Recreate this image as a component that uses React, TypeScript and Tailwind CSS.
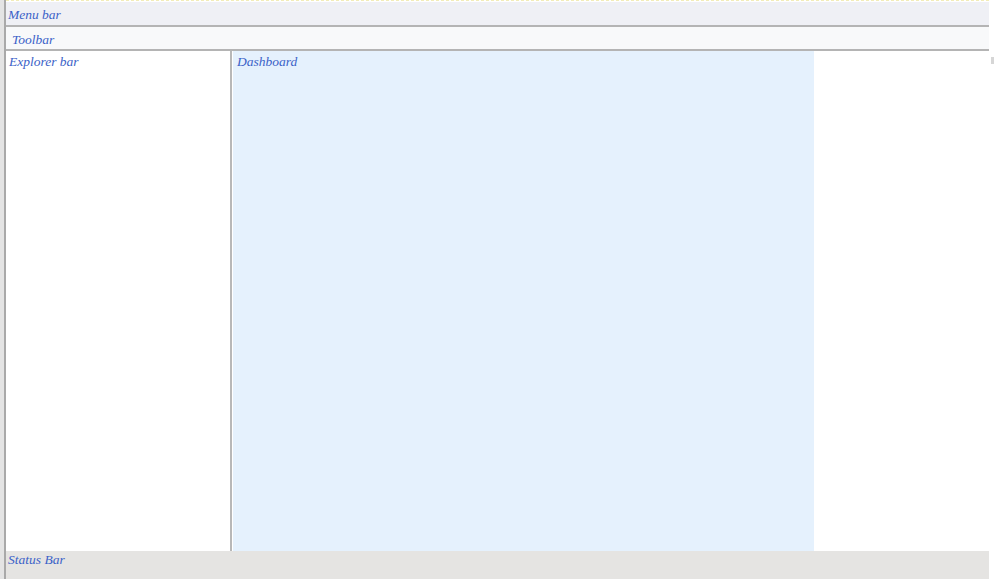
import React from 'react';

const label = "block italic text-[13.5px] leading-none text-[#3b62c8]";

const App: React.FC = () => {
  return (
    <div
      className="w-[994px] h-[579px] flex bg-white overflow-hidden"
      style={{ fontFamily: '"Liberation Serif", "DejaVu Serif", serif' }}
    >
      {/* left frame edge */}
      <div className="w-[6px] h-full flex">
        <div className="w-[4px] bg-[#e4e4e4]" />
        <div className="w-[2px] bg-[#a9a9a9]" />
      </div>

      <div className="w-[983px] h-full flex flex-col">
        <div className="h-[2px] border-t border-dashed border-[#f2ecb8]" />
        {/* Menu bar */}
        <div className="h-[25px] bg-[#eff0f5] border-b-2 border-[#b4b4b4] px-[2px] pt-[6px]">
          <span className={label}>Menu bar</span>
        </div>
        {/* Toolbar */}
        <div className="h-[24px] bg-[#f8f9fa] border-b-2 border-[#b4b4b4] px-[6px] pt-[6px]">
          <span className={label}>Toolbar</span>
        </div>
        {/* Main area */}
        <div className="flex-1 flex">
          <div className="w-[224px] bg-white px-[3px] pt-[4px]">
            <span className={label}>Explorer bar</span>
          </div>
          <div className="w-[3px] flex">
            <div className="w-[2px] bg-[#b8b8b8]" />
            <div className="w-[1px] bg-white" />
          </div>
          <div className="w-[581px] bg-[#e5f1fd] px-[4px] pt-[4px]">
            <span className={label}>Dashboard</span>
          </div>
          <div className="flex-1 bg-white" />
        </div>
        {/* Status bar */}
        <div className="h-[28px] bg-[#e5e4e2] px-[2px] pt-[2px]">
          <span className={label}>Status Bar</span>
        </div>
      </div>

      {/* right edge */}
      <div className="flex-1 flex flex-col pt-[57px]">
        <div className="ml-[2px] w-[3px] h-[7px] bg-[#d6d6d6]" />
      </div>
    </div>
  );
};

export default App;
